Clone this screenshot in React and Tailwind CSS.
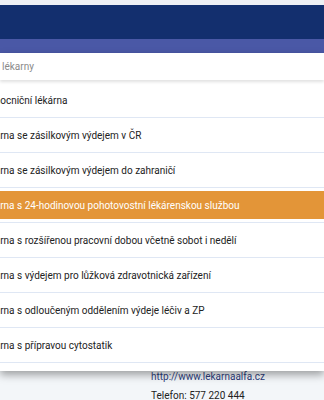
import React from 'react';

const items = [
  'Nemocniční lékárna',
  'Lékárna se zásilkovým výdejem v ČR',
  'Lékárna se zásilkovým výdejem do zahraničí',
  'Lékárna s 24-hodinovou pohotovostní lékárenskou službou',
  'Lékárna s rozšířenou pracovní dobou včetně sobot i nedělí',
  'Lékárna s výdejem pro lůžková zdravotnická zařízení',
  'Lékárna s odloučeným oddělením výdeje léčiv a ZP',
  'Lékárna s přípravou cytostatik',
];

export default function App() {
  return (
    <div className="relative w-[324px] h-[400px] overflow-hidden bg-[#f3f6f9] font-['Roboto','Liberation_Sans',sans-serif]">
      <div className="h-[5px] bg-[#eef0f4]" />
      <div className="h-[34px] bg-[#132f6e]" />
      <div className="h-[14px] bg-[#4a58a6]" />

      <div className="pt-[314px] pl-[151px] text-[10px] leading-[19px]">
        <div className="text-[#2e3d7c]">http://www.lekarnaalfa.cz</div>
        <div className="text-[#222]">Telefon: 577 220 444</div>
      </div>

      <div className="absolute left-0 top-[53px] w-[324px] bg-white pb-[8px] shadow-[0_4px_8px_rgba(0,0,0,0.35)]">
        <div className="h-[27px] flex items-center overflow-hidden text-[10px] text-[#8a8a8a] shadow-[0_2px_3px_rgba(0,0,0,0.12)]">
          <span className="ml-[2px] whitespace-nowrap">lékarny</span>
        </div>
        <div className="h-[3px]" />
        <ul className="text-[10px] text-[#222]">
          {items.map((t, i) => (
            <li
              key={t}
              className="h-[35px] border-b border-[#dfe7f4] overflow-hidden flex"
            >
              {i === 3 ? (
                <div className="flex-1 my-[3px] bg-[#e39538] text-white flex items-center">
                  <span className="ml-[-21px] whitespace-nowrap">{t}</span>
                </div>
              ) : (
                <div className="flex-1 flex items-center">
                  <span className="ml-[-21px] whitespace-nowrap">{t}</span>
                </div>
              )}
            </li>
          ))}
        </ul>
      </div>
    </div>
  );
}
